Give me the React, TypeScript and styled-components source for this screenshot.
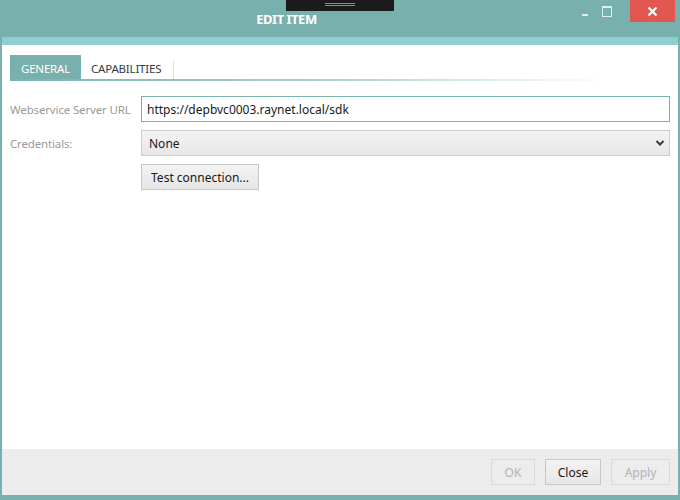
import React from 'react';
import styled, { createGlobalStyle } from 'styled-components';

const GlobalStyle = createGlobalStyle`
  html, body {
    margin: 0;
    padding: 0;
    background: #ffffff;
  }
  * {
    box-sizing: border-box;
  }
`;

const Window = styled.div`
  width: 680px;
  height: 500px;
  display: flex;
  flex-direction: column;
  background: #78b0ae;
  font-family: 'Noto Sans', 'Open Sans', sans-serif;
  font-size: 12px;
  padding: 0 2px 5px 2px;
`;

const TitleBar = styled.div`
  position: relative;
  height: 37px;
  display: flex;
  align-items: center;
  justify-content: center;
  margin: 0 -2px;
  padding-right: 107px;
  flex-shrink: 0;
`;

const Title = styled.div`
  color: white;
  font-weight: 700;
  font-size: 13px;
  letter-spacing: -0.5px;
`;

const Grip = styled.div`
  position: absolute;
  left: 286px;
  top: 0;
  width: 108px;
  height: 11px;
  background: #1b1b1b;
  display: flex;
  flex-direction: column;
  align-items: center;
  padding-top: 3px;
  gap: 1px;

  span {
    display: block;
    width: 30px;
    height: 1px;
    background: #8a8a8a;
  }
`;

const WindowButtons = styled.div`
  position: absolute;
  right: 5px;
  top: 0;
  display: flex;
  align-items: flex-start;
`;

const CaptionButton = styled.div<{ $close?: boolean }>`
  width: ${p => (p.$close ? '45px' : '22px')};
  height: 22px;
  display: flex;
  align-items: center;
  justify-content: center;
  background: ${p => (p.$close ? '#e2574f' : 'transparent')};
  margin-left: ${p => (p.$close ? '12px' : '0')};
`;

const Accent = styled.div`
  height: 8px;
  background: #8fcfcf;
  flex-shrink: 0;
`;

const Body = styled.div`
  flex: 1;
  background: white;
  display: flex;
  flex-direction: column;
  padding: 10px 8px 0 8px;
`;

const TabBar = styled.div`
  display: flex;
  align-items: stretch;
  height: 26px;
  position: relative;

  &::after {
    content: '';
    position: absolute;
    left: 0;
    bottom: 0;
    width: 600px;
    height: 2px;
    background: linear-gradient(to right, #7cb3b1 0%, #a6cfcd 50%, rgba(255, 255, 255, 0) 100%);
  }
`;

const Tab = styled.div<{ $active?: boolean }>`
  display: flex;
  align-items: center;
  padding: ${p => (p.$active ? '0 11px' : '0 12px 5px 10px')};
  font-size: 11.5px;
  color: ${p => (p.$active ? '#ffffff' : '#333d45')};
  background: ${p => (p.$active ? '#78b0ae' : 'transparent')};
  border-right: ${p => (p.$active ? 'none' : '1px solid #d4e6e5')};
  margin-top: ${p => (p.$active ? '0' : '5px')};
  text-transform: uppercase;
  letter-spacing: -0.2px;
`;

const Form = styled.div`
  display: grid;
  grid-template-columns: 131px 529px;
  row-gap: 8px;
  margin-top: 15px;
  align-items: center;
`;

const Label = styled.div`
  color: #9a9a9a;
  font-size: 11.5px;
  letter-spacing: -0.15px;
`;

const TextInput = styled.div`
  height: 26px;
  border: 1px solid #78b0ae;
  display: flex;
  align-items: center;
  padding: 0 5px;
  color: #1a1a1a;
  font-size: 12px;
`;

const Select = styled.div`
  height: 26px;
  border: 1px solid #cccccc;
  background: linear-gradient(#f3f3f3, #e7e7e7);
  display: flex;
  align-items: center;
  justify-content: space-between;
  padding: 0 4px 0 7px;
  color: #1a1a1a;
  font-size: 12px;
`;

const Button = styled.div<{ $disabled?: boolean; $width: number }>`
  width: ${p => p.$width}px;
  height: 26px;
  display: flex;
  align-items: center;
  justify-content: center;
  font-size: 12px;
  color: ${p => (p.$disabled ? '#b3b3b3' : '#1a1a1a')};
  background: ${p => (p.$disabled ? '#ececec' : 'linear-gradient(#f3f3f3, #e6e6e6)')};
  border: 1px solid ${p => (p.$disabled ? '#dadada' : '#c8c8c8')};
`;

const Footer = styled.div`
  height: 46px;
  background: #ececec;
  display: flex;
  justify-content: flex-end;
  align-items: center;
  gap: 10px;
  padding: 0 8px 0 0;
  flex-shrink: 0;
`;

const Spacer = styled.div`
  grid-column: 1;
`;

const App: React.FC = () => {
  return (
    <Window>
      <GlobalStyle />
      <TitleBar>
        <Grip>
          <span />
          <span />
        </Grip>
        <Title>EDIT ITEM</Title>
        <WindowButtons>
          <CaptionButton>
            <svg width="10" height="10" viewBox="0 0 10 10">
              <rect x="2" y="8" width="6" height="2" fill="#dfeeed" />
            </svg>
          </CaptionButton>
          <CaptionButton>
            <svg width="10" height="11" viewBox="0 0 10 11">
              <rect x="0.5" y="0.5" width="9" height="10" fill="none" stroke="#dfeeed" strokeWidth="1" />
              <rect x="0.5" y="0.5" width="9" height="1.5" fill="#dfeeed" />
            </svg>
          </CaptionButton>
          <CaptionButton $close>
            <svg width="11" height="11" viewBox="0 0 11 11">
              <path d="M1.5 1.5 L9.5 9.5 M9.5 1.5 L1.5 9.5" stroke="white" strokeWidth="2.2" />
            </svg>
          </CaptionButton>
        </WindowButtons>
      </TitleBar>
      <Accent />
      <Body>
        <TabBar>
          <Tab $active>General</Tab>
          <Tab>Capabilities</Tab>
        </TabBar>
        <Form>
          <Label>Webservice Server URL</Label>
          <TextInput>https://depbvc0003.raynet.local/sdk</TextInput>
          <Label>Credentials:</Label>
          <Select>
            <span>None</span>
            <svg width="10" height="8" viewBox="0 0 10 8">
              <path d="M1.5 2 L5 5.5 L8.5 2" fill="none" stroke="#3a3a3a" strokeWidth="2" />
            </svg>
          </Select>
          <Spacer />
          <Button $width={118}>Test connection...</Button>
        </Form>
      </Body>
      <Footer>
        <Button $disabled $width={44}>OK</Button>
        <Button $width={56}>Close</Button>
        <Button $disabled $width={59}>Apply</Button>
      </Footer>
    </Window>
  );
};

export default App;
